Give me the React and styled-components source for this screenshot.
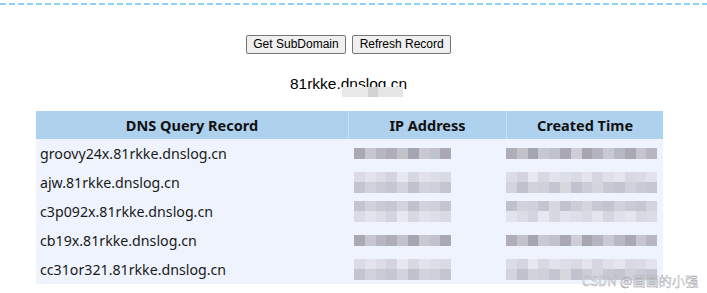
import React from 'react'
import styled, { createGlobalStyle } from 'styled-components'

const GlobalStyle = createGlobalStyle`
  html, body {
    margin: 0;
    padding: 0;
    background: #fff;
  }
`

const Page = styled.div`
  position: relative;
  width: 707px;
  height: 293px;
  overflow: hidden;
  padding-top: 3px;
  box-sizing: border-box;
`

const DashLine = styled.div`
  height: 2px;
  background: repeating-linear-gradient(90deg, #8fd0fa 0 6px, transparent 6px 9px);
`

const Toolbar = styled.div`
  display: flex;
  justify-content: center;
  gap: 6px;
  margin-top: 30px;
  padding-right: 10px;
`

const Button = styled.button`
  font-family: "Liberation Sans", Arial, sans-serif;
  font-size: 12px;
  height: 19px;
  padding: 0 6.5px;
  background: #efefef;
  border: 1px solid #767676;
  border-radius: 2px;
  color: #000;
  line-height: 17px;
`

const Domain = styled.div`
  position: relative;
  text-align: center;
  font-family: "Liberation Sans", Arial, sans-serif;
  font-size: 15.5px;
  color: #000;
  margin-top: 20px;
  padding-right: 10px;
  height: 20px;
  line-height: 20px;
`

const Smudge = styled.div`
  position: absolute;
  left: 342px;
  top: 13px;
  width: 61px;
  height: 10px;
  background: linear-gradient(90deg, #e8e8e8 0 26px, #d2d2d2 26px 36px, #e6e6e6 36px);
`

const Table = styled.div`
  margin: 17px 0 0 36px;
  width: 627px;
  display: grid;
  grid-template-columns: 312px 158px 157px;
  font-family: "Noto Sans", "Open Sans", sans-serif;
`

const Head = styled.div`
  height: 28px;
  background: #aed2ee;
  font-weight: 700;
  font-size: 14.5px;
  color: #111;
  display: flex;
  align-items: center;
  justify-content: center;
  border-left: ${p => (p.$first ? 'none' : '1px solid #c9e1f4')};
`

const Cell = styled.div`
  height: 29px;
  background: #eef3fd;
  display: flex;
  align-items: center;
  font-size: 14.2px;
  color: #1a1a1a;
  padding-left: ${p => p.$pad ?? 4}px;
`

const Mosaic = styled.div`
  display: flex;
  flex-direction: column;
`

const MosaicRow = styled.div`
  display: flex;
  height: ${p => p.$h}px;
`

const Tile = styled.div`
  width: 10.8px;
  height: 100%;
  background: ${p => p.$c};
`

const Watermark = styled.div`
  position: absolute;
  left: 582px;
  top: 271px;
  font-family: "Noto Sans CJK SC", "Noto Sans", sans-serif;
  font-size: 13px;
  color: rgba(255, 255, 255, 0.9);
  -webkit-text-stroke: 0.45px #a4a4ab;
  letter-spacing: 0.2px;
`

const dark = ['#a9a9b3', '#c6c6d1', '#b8b6c1', '#aeadb8', '#c2c2cb', '#a3a6b1', '#c8c8d0', '#c0c2cd', '#a9a8b4', '#cfced8', '#a7a5ae', '#b4b4c0', '#c9c9d2', '#b6b8c4']
const light = ['#dadbe5', '#e2e3ec', '#dcdce6', '#d3d4df', '#e6e7ef', '#d6d8e2', '#e1e2eb', '#dddfe8', '#d9dae4', '#e3e4ec', '#d5d6e0', '#dfe0e9', '#e4e5ed', '#d8d9e3']
const mid = ['#c3c4cf', '#d0d1db', '#c9cad5', '#c5c6d1', '#d2d3dc', '#bfc1cc', '#d1d2db', '#cfd0da', '#c4c5d0', '#d6d7df', '#c1c2cd', '#cbccd6', '#d4d5de', '#c7c8d2']

const shift = (arr, n) => arr.map((_, i) => arr[(i + n) % arr.length])

const rows = [
  { name: 'groovy24x.81rkke.dnslog.cn', ip: [[11, dark]], time: [[11, shift(dark, 3)]] },
  { name: 'ajw.81rkke.dnslog.cn', ip: [[10, light], [11, mid]], time: [[10, shift(light, 2)], [11, shift(mid, 4)]] },
  { name: 'c3p092x.81rkke.dnslog.cn', ip: [[10, mid], [11, light]], time: [[10, shift(mid, 5)], [11, shift(light, 1)]] },
  { name: 'cb19x.81rkke.dnslog.cn', ip: [[11, dark]], time: [[11, shift(dark, 3)]] },
  { name: 'cc31or321.81rkke.dnslog.cn', ip: [[10, light], [11, mid]], time: [[10, shift(light, 2)], [11, shift(mid, 4)]] },
]

const Blur = ({ lines, count }) => (
  <Mosaic>
    {lines.map(([h, colors], i) => (
      <MosaicRow key={i} $h={h}>
        {Array.from({ length: count }).map((_, j) => (
          <Tile key={j} $c={colors[j % colors.length]} />
        ))}
      </MosaicRow>
    ))}
  </Mosaic>
)

const App = () => {
  return (
    <Page>
      <GlobalStyle />
      <DashLine />
      <Toolbar>
        <Button>Get SubDomain</Button>
        <Button>Refresh Record</Button>
      </Toolbar>
      <Domain>
        81rkke.dnslog.cn
        <Smudge />
      </Domain>
      <Table>
        <Head $first>DNS Query Record</Head>
        <Head>IP Address</Head>
        <Head>Created Time</Head>
        {rows.map(r => (
          <React.Fragment key={r.name}>
            <Cell>{r.name}</Cell>
            <Cell $pad={6}><Blur lines={r.ip} count={9} /></Cell>
            <Cell $pad={0}><Blur lines={r.time} count={14} /></Cell>
          </React.Fragment>
        ))}
      </Table>
      <Watermark>CSDN @画画的小强</Watermark>
    </Page>
  )
}

export default App
